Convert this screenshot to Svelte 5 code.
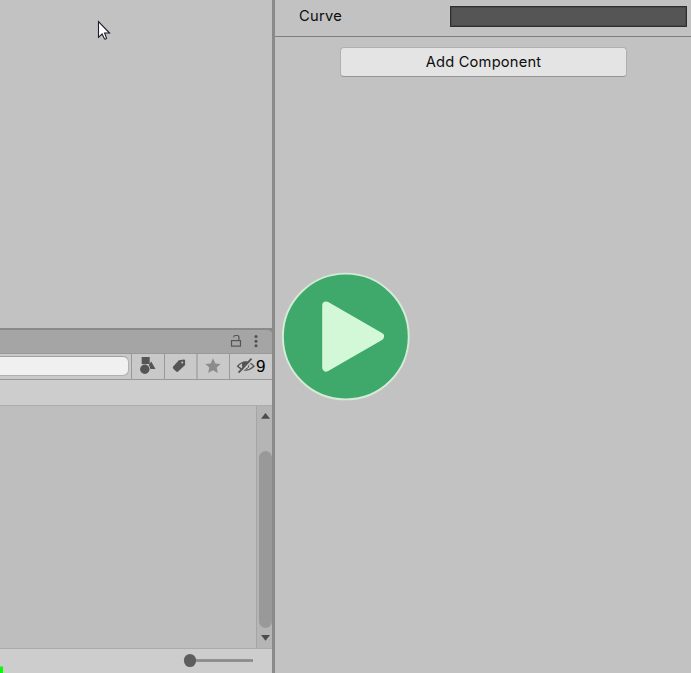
<script>
  const hidden = 9;
</script>

<div class="editor">
  <div class="left">
    <div class="scene"></div>
    <div class="project">
      <div class="tabs">
        <svg class="lock" width="14" height="14" viewBox="0 0 14 14" fill="none" stroke="#555" stroke-width="1.2">
          <rect x="2.5" y="6.6" width="9" height="5.5" />
          <path d="M9.9 6.5V3.2Q9.9 1.5 8.2 1.5H6.3Q4.7 1.5 4.7 3.2" />
        </svg>
        <svg class="dots" width="4" height="14" viewBox="0 0 4 14" fill="#505050">
          <circle cx="2" cy="1.6" r="1.5" /><circle cx="2" cy="6.2" r="1.5" /><circle cx="2" cy="10.8" r="1.5" />
        </svg>
      </div>
      <div class="toolbar">
        <div class="searchwrap"><div class="search"></div></div>
        <div class="tool t1">
          <svg width="32" height="25" viewBox="0 0 32 25" fill="#555">
            <rect x="9.7" y="3" width="8" height="7" />
            <circle cx="12.8" cy="15.2" r="4.7" />
            <path d="M19.2 7.4L23.5 15H18.4Q18 12.3 16.7 11Z" />
          </svg>
        </div>
        <div class="tool t2">
          <svg width="31" height="25" viewBox="0 0 31 25">
            <path d="M13.8 6.3L18.8 5.6Q20.1 5.5 20.1 6.8V11L13.1 17.5Q12.1 18.3 11.2 17.4L8.3 14.8Q7.2 13.7 8.2 12.6Z" fill="#555" />
            <circle cx="17.2" cy="8.6" r="1" fill="#c9c9c9" />
          </svg>
        </div>
        <div class="tool t3">
          <svg width="31" height="25" viewBox="0 0 31 25">
            <path d="M15 4.3L17.3 9.4L22.6 9.9L18.7 13.6L19.8 19L15 16.3L10.2 19L11.3 13.6L7.4 9.9L12.7 9.4Z" fill="#8c8c8c" />
          </svg>
        </div>
        <div class="tool t4">
          <svg width="26" height="25" viewBox="0 0 26 25" fill="none" stroke="#555">
            <path d="M7.6 12.2Q15.6 3.6 24 12.2Q15.6 20 7.6 12.2Z" stroke-width="1.3" />
            <path d="M12 9Q14.5 7 18.8 8.4L13.3 14.8Q11.4 12.4 12 9Z" fill="#555" stroke="none" />
            <path d="M19 10.4Q19.3 14.3 15.8 15.1" stroke-width="1" />
            <path d="M9.8 19.8L22.6 5.8" stroke="#c9c9c9" stroke-width="1.4" />
            <path d="M8.6 18.6L21.5 4.7" stroke-width="1.9" />
          </svg>
          <span class="count">{hidden}</span>
        </div>
      </div>
      <div class="crumbs"></div>
      <div class="files">
        <div class="list"></div>
        <div class="scroll">
          <svg width="9" height="6" viewBox="0 0 9 6"><path d="M0 5.7L4.5 0L9 5.7Z" fill="#4c4d48" /></svg>
          <div class="thumb"></div>
          <div class="down">
            <svg width="9" height="6" viewBox="0 0 9 6"><path d="M0 0H9L4.5 5.7Z" fill="#4c4d48" /></svg>
          </div>
        </div>
      </div>
      <div class="footer">
        <div class="status"></div>
        <svg class="slider" width="72" height="16" viewBox="0 0 72 16">
          <rect x="9" y="6.1" width="61" height="2.8" fill="#8c8c8c" />
          <ellipse cx="7" cy="7.5" rx="6.1" ry="6.6" fill="#5e5e5e" />
        </svg>
      </div>
    </div>
  </div>
  <div class="divider"></div>
  <div class="inspector">
    <div class="prop">
      <span class="label">Curve</span>
      <div class="curve"></div>
    </div>
    <button class="add">Add Component</button>
  </div>

  <svg class="cursor" width="14" height="22" viewBox="0 0 14 22">
    <path d="M1.5 1.6V17.3L5.1 14L7.4 18.7Q8.3 19.7 9.6 18.4L7.6 13H12.5Z" fill="#fff" stroke="#1d1a2b" stroke-width="1.1" />
  </svg>
  <svg class="play" width="130" height="130" viewBox="0 0 130 130">
    <circle cx="64.8" cy="65.5" r="62.9" fill="#3fa96c" stroke="#d5ebd6" stroke-width="1.9" />
    <path d="M45.2 34.5L99 65.5L45.2 96.5Z" fill="#d3f8d7" stroke="#d3f8d7" stroke-width="8" stroke-linejoin="round" />
  </svg>
</div>

<style>
  :global(body) { margin: 0; overflow: hidden; }
  .editor {
    position: relative;
    display: flex;
    width: 691px;
    height: 673px;
    overflow: hidden;
    background: #c2c2c2;
    color: #0d0d0d;
    font-family: Inter, "Liberation Sans", sans-serif;
  }
  .editor * { box-sizing: border-box; }
  svg { display: block; flex: none; }
  .left { width: 272px; display: flex; flex-direction: column; }
  .scene { height: 328px; }
  .project { flex: 1; display: flex; flex-direction: column; background: #8a8a8a; }
  .tabs {
    height: 26px;
    border-top: 2px solid #8a8a8a;
    border-bottom: 1px solid #999;
    border-top-right-radius: 5px;
    background: #a5a5a5;
    display: flex;
    justify-content: flex-end;
    align-items: flex-start;
    gap: 11px;
    padding: 4px 14px 0 0;
  }
  .dots { margin-top: 1px; }
  .toolbar { height: 26px; display: flex; background: #c9c9c9; border-bottom: 1px solid #999; }
  .searchwrap { width: 131px; padding: 2px 2px 3px 0; }
  .search {
    height: 20px;
    background: #f0f0f0;
    border: 1px solid #b0b0b0;
    border-top-color: #a0a0a0;
    border-left: 0;
    border-radius: 0 6px 6px 0;
  }
  .tool { display: flex; border-left: 1px solid #999; }
  .t1 { width: 33px; }
  .t2 { width: 32px; }
  .t3 { width: 33px; border-left: 2px solid #adadad; }
  .t4 { width: 43px; }
  .count { font-family: "Liberation Sans", sans-serif; font-size: 17px; line-height: 25px; color: #000; }
  .crumbs { height: 26px; background: #cdcdcd; border-bottom: 1px solid #acacac; }
  .files { height: 243px; display: flex; background: #bebebe; border-bottom: 1px solid #acacac; }
  .list { width: 256px; }
  .scroll {
    width: 16px;
    display: flex;
    flex-direction: column;
    align-items: center;
    padding: 7px 0 0 2px;
    background: #b5b5b5;
    border-left: 1px solid #a5a5a5;
  }
  .thumb { width: 13px; height: 177px; margin-top: 32px; border-radius: 6.5px; background: #999; }
  .down { margin-top: 7px; }
  .footer { flex: 1; display: flex; align-items: flex-start; justify-content: space-between; background: #cdcdcd; padding: 4px 17px 0 0; }
  .status { width: 3px; height: 7px; margin-top: 13px; background: #0f0; border-top: 1px solid #79d979; }
  .divider { width: 3px; background: #8a8a8a; }
  .inspector { flex: 1; display: flex; flex-direction: column; }
  .prop { height: 37px; display: flex; border-bottom: 1px solid #7f7f7f; padding: 6px 0 0 24px; }
  .label { width: 151px; font-size: 14.7px; line-height: 20px; letter-spacing: 0.3px; }
  .curve { width: 237px; height: 21px; background: #555; border: 1px solid #303030; box-shadow: inset 0 0 0 1px #484848; }
  .add {
    width: 287px;
    height: 30px;
    margin: 10px 0 0 65px;
    padding: 0;
    border: 1px solid #b0b0b0;
    border-bottom-color: #939393;
    border-radius: 4px;
    background: #e4e4e4;
    color: #0d0d0d;
    font-family: inherit;
    font-size: 14.7px;
    letter-spacing: 0.18px;
    line-height: 28px;
  }
  .cursor { position: absolute; left: 97px; top: 20px; }
  .play { position: absolute; left: 281px; top: 271px; }
</style>
